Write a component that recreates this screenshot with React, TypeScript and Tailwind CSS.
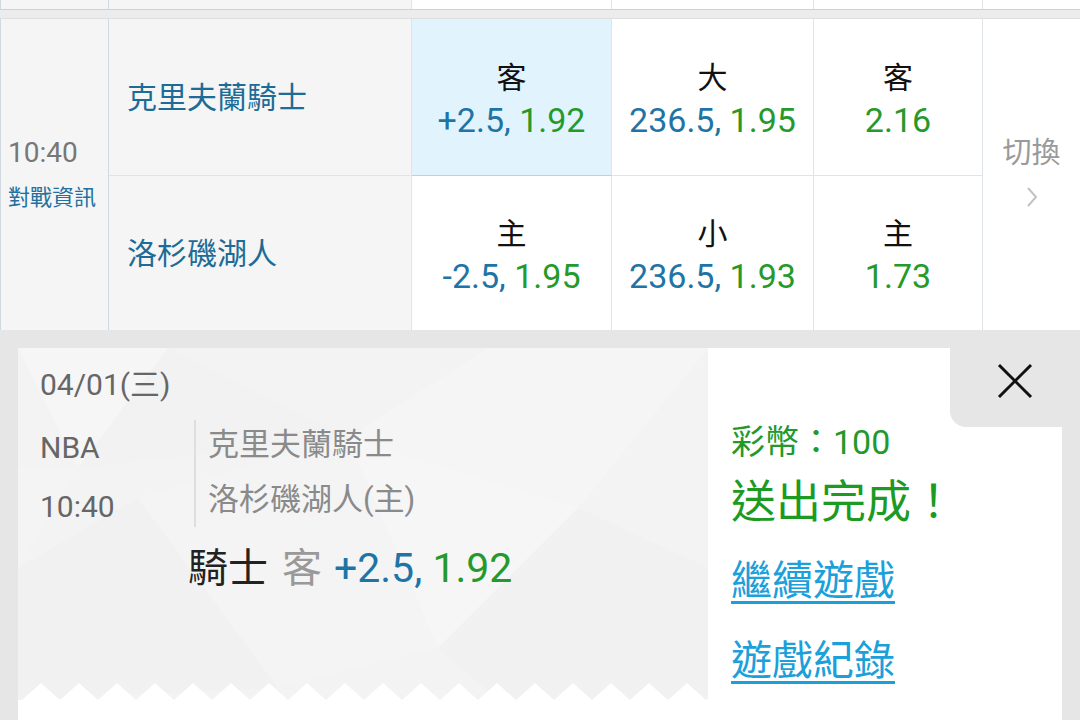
const font = "font-['Roboto','Noto_Sans_CJK_TC',sans-serif]"

type Odd = { label: string; line?: string; price: string; selected?: boolean }

const awayOdds: Odd[] = [
  { label: '客', line: '+2.5,', price: '1.92', selected: true },
  { label: '大', line: '236.5,', price: '1.95' },
  { label: '客', price: '2.16' },
]

const homeOdds: Odd[] = [
  { label: '主', line: '-2.5,', price: '1.95' },
  { label: '小', line: '236.5,', price: '1.93' },
  { label: '主', price: '1.73' },
]

function OddCell({ odd, top }: { odd: Odd; top: boolean }) {
  return (
    <div
      className={`flex flex-col items-center justify-center pt-1 border-r border-[#dfe4e8] ${
        top ? 'border-b' : ''
      } ${odd.selected ? 'bg-[#e1f4fd] border-b-[#b9d3e4]' : 'bg-white'}`}
    >
      <span className="text-[30px] leading-[43px] text-[#111]">{odd.label}</span>
      <span className="text-[34px] leading-[43px]">
        {odd.line ? <span className="text-[#1f74a6]">{odd.line} </span> : null}
        <span className="text-[#259a2b]">{odd.price}</span>
      </span>
    </div>
  )
}

function TicketPattern() {
  // faint polygon background + zigzag edge at the bottom of the ticket
  const teeth = Array.from({ length: 19 }, (_, i) => i)
  return (
    <svg className="absolute inset-0 h-full w-full" viewBox="0 0 690 352" preserveAspectRatio="none">
      <rect width="690" height="352" fill="#f3f3f3" />
      <polygon points="0,0 150,0 60,120" fill="#f6f6f6" />
      <polygon points="60,120 150,0 330,90" fill="#f2f2f2" />
      <polygon points="330,90 470,0 690,0 560,160" fill="#f5f5f5" />
      <polygon points="0,220 120,150 260,340 0,352" fill="#f1f1f1" />
      <polygon points="120,150 330,90 420,300 260,340" fill="#f4f4f4" />
      <polygon points="420,300 560,160 690,220 690,352 480,352" fill="#f1f1f1" />
      <polygon points="330,90 560,160 420,300" fill="#f6f6f6" />
      <polygon points="0,120 60,120 0,220" fill="#f4f4f4" />
      {teeth.map((i) => (
        <polygon
          key={i}
          points={`${i * 38 + 4},352 ${i * 38 + 23},335 ${i * 38 + 42},352`}
          fill="#ffffff"
        />
      ))}
    </svg>
  )
}

export default function App() {
  return (
    <div className={`h-[720px] w-full overflow-hidden bg-[#e6e6e6] ${font}`}>
      {/* tail of previous row */}
      <div className="flex h-[10px] border-b border-[#c9d3db]">
        <div className="w-[109px] border-l border-r border-[#cfd9e0] bg-[#f5f5f5]" />
        <div className="w-[303px] border-r border-[#dfe4e8] bg-[#f5f5f5]" />
        <div className="w-[200px] border-r border-[#dfe4e8] bg-white" />
        <div className="w-[202px] border-r border-[#dfe4e8] bg-white" />
        <div className="w-[169px] border-r border-[#dfe4e8] bg-white" />
        <div className="flex-1 bg-white" />
      </div>
      <div className="h-[9px] border-b border-[#dedede] bg-[#ececec]" />

      {/* match row */}
      <div className="flex h-[311px]">
        <div className="flex w-[109px] flex-col justify-center border-l border-r border-[#cfd9e0] bg-[#f5f5f5] pb-[2px] pl-[7px]">
          <span className="text-[28px] leading-[36px] text-[#777]">10:40</span>
          <span className="mt-[12px] text-[22px] leading-[30px] text-[#23709f]">對戰資訊</span>
        </div>

        <div className="grid grid-cols-[303px_200px_202px_169px] grid-rows-[157px_154px]">
          <div className="flex items-center border-b border-r border-[#dfe4e8] bg-[#f5f5f5] pl-[18px] text-[30px] text-[#1d6c97]">
            克里夫蘭騎士
          </div>
          {awayOdds.map((o, i) => (
            <OddCell key={'a' + i} odd={o} top />
          ))}
          <div className="flex items-center border-r border-[#dfe4e8] bg-[#f5f5f5] pl-[18px] text-[30px] text-[#1d6c97]">
            洛杉磯湖人
          </div>
          {homeOdds.map((o, i) => (
            <OddCell key={'h' + i} odd={o} top={false} />
          ))}
        </div>

        <div className="flex flex-1 flex-col items-center justify-center bg-white pb-[6px]">
          <span className="text-[29px] leading-[36px] text-[#9a9a9a]">切換</span>
          <svg className="mt-[14px]" width="14" height="24" viewBox="0 0 14 24">
            <polyline points="3,3 11,12 3,21" fill="none" stroke="#c2c2c2" strokeWidth="2" />
          </svg>
        </div>
      </div>

      {/* confirmation card */}
      <div className="px-[18px] pt-[18px]">
        <div className="relative flex h-[400px] bg-white">
          <div className="relative h-[352px] w-[690px]">
            <TicketPattern />
            <div className="relative pl-[22px] pt-[19px]">
              <div className="text-[30px] leading-[36px] text-[#666]">04/01(三)</div>
              <div className="mt-[17px] flex">
                <div className="w-[154px] pt-[8px] text-[30px] text-[#666]">
                  <div className="leading-[40px]">NBA</div>
                  <div className="mt-[19px] leading-[40px]">10:40</div>
                </div>
                <div className="border-l-2 border-[#dedede] pl-[12px] pt-[5px] text-[31px] text-[#8a8a8a]">
                  <div className="leading-[40px]">克里夫蘭騎士</div>
                  <div className="mt-[15px] leading-[40px]">洛杉磯湖人(主)</div>
                </div>
              </div>
              <div className="ml-[148px] mt-[16px] text-[40px] leading-[50px]">
                <span className="text-[#222]">騎士</span>
                <span className="ml-[14px] text-[#999]">客</span>
                <span className="ml-[12px] text-[41px] text-[#1f74a6]">+2.5, </span>
                <span className="text-[41px] text-[#259a2b]">1.92</span>
              </div>
            </div>
          </div>

          <div className="flex-1 pl-[23px] pt-[74px]">
            <div className="text-[34px] leading-[40px] text-[#22992a]">彩幣：100</div>
            <div className="mt-[15px] text-[45px] leading-[52px] text-[#1c9a22]">送出完成！</div>
            <div className="mt-[27px] text-[41px] leading-[50px] text-[#1ba0da] underline decoration-[3px] underline-offset-[6px]">
              繼續遊戲
            </div>
            <div className="mt-[30px] text-[41px] leading-[50px] text-[#1ba0da] underline decoration-[3px] underline-offset-[6px]">
              遊戲紀錄
            </div>
          </div>

          <button
            type="button"
            className="absolute right-0 top-0 flex h-[79px] w-[112px] items-start justify-end rounded-bl-[16px] bg-[#e6e6e6] pr-[29px] pt-[15px]"
          >
            <svg width="36" height="36" viewBox="0 0 36 36">
              <line x1="2" y1="2" x2="34" y2="34" stroke="#111" strokeWidth="3" />
              <line x1="34" y1="2" x2="2" y2="34" stroke="#111" strokeWidth="3" />
            </svg>
          </button>
        </div>
      </div>
    </div>
  )
}
